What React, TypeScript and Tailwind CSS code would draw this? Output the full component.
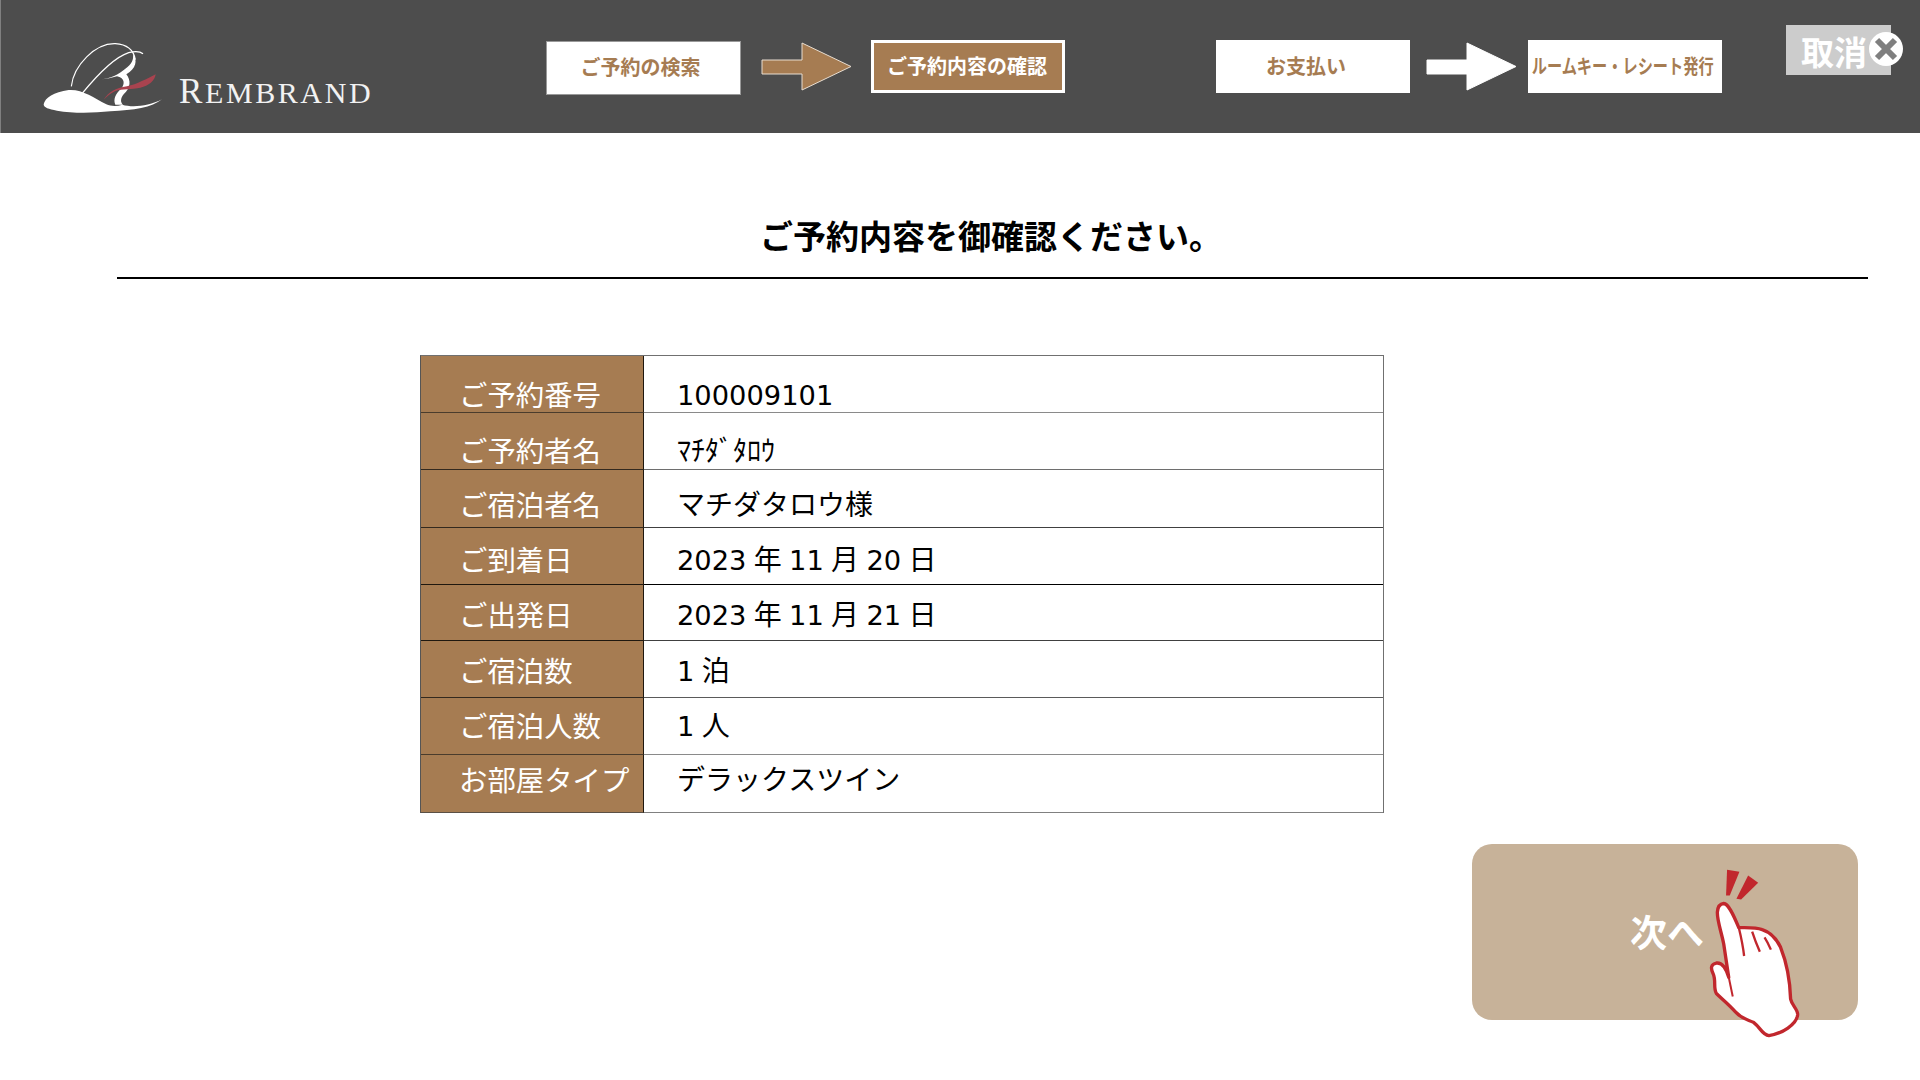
const D = ({ children }: { children: string }) => <span className="text-[27.3px]">{children}</span>;

const rows = [
  { label: "ご予約番号", value: <D>100009101</D>, h: "h-[57px]", pt: "pt-[19px]", line: "border-[#8a8a8a]", dark: "border-[#4a3c2c]" },
  { label: "ご予約者名", value: "ﾏﾁﾀﾞﾀﾛｳ", h: "h-[57px]", pt: "pt-[18px]", line: "border-[#6e6e6e]", dark: "border-[#33291e]" },
  { label: "ご宿泊者名", value: "マチダタロウ様", h: "h-[58px]", pt: "pt-[15px]", line: "border-[#404040]", dark: "border-[#33291e]" },
  { label: "ご到着日", value: <><D>2023</D> 年 <D>11</D> 月 <D>20</D> 日</>, h: "h-[57px]", pt: "pt-[12px]", line: "border-[#000000]", dark: "border-[#1f180f]" },
  { label: "ご出発日", value: <><D>2023</D> 年 <D>11</D> 月 <D>21</D> 日</>, h: "h-[56px]", pt: "pt-[10px]", line: "border-[#404040]", dark: "border-[#1f180f]" },
  { label: "ご宿泊数", value: <><D>1</D> 泊</>, h: "h-[57px]", pt: "pt-[10px]", line: "border-[#5a5a5a]", dark: "border-[#33291e]" },
  { label: "ご宿泊人数", value: <><D>1</D> 人</>, h: "h-[57px]", pt: "pt-[8px]", line: "border-[#8a8a8a]", dark: "border-[#4a3c2c]" },
  { label: "お部屋タイプ", value: "デラックスツイン", h: "h-[58px]", pt: "pt-[5px]", line: "border-[#808080]", dark: "border-[#5a5045]" },
];

function Arrow({ fill, stroke }: { fill: string; stroke: string }) {
  return (
    <svg width="92" height="50" viewBox="0 0 92 50" className="shrink-0">
      <polygon points="1,18 41,18 41,1 90,24.5 41,48 41,32 1,32" fill={fill} stroke={stroke} strokeWidth="1" />
    </svg>
  );
}

function Logo() {
  return (
    <svg width="122" height="72" viewBox="125 125 366 216" className="shrink-0">
      <path d="M130 312 C134 292 160 276 205 269 C245 266 280 292 318 312 C332 318 350 318 366 313 C395 322 445 318 485 297 C455 322 400 330 330 333 C280 338 220 340 170 331 C145 327 130 322 130 312 Z" fill="#fff" />
      <path d="M213 258 C220 195 285 128 345 130 C380 132 400 150 405 178" fill="none" stroke="#fff" strokeWidth="3.5" />
      <path d="M245 280 C290 225 345 170 385 157 C400 153 418 152 428 160" fill="none" stroke="#fff" strokeWidth="4" />
      <path d="M300 237 C330 235 355 222 375 205 C395 192 400 178 398 162 C412 180 408 205 378 222 C392 240 392 262 370 282 C360 295 360 306 368 313 L345 313 C338 298 345 280 362 266 C376 250 372 232 350 228 C335 232 318 237 300 237 Z" fill="#fff" />
      <path d="M310 298 C325 275 345 263 380 258 C410 252 440 235 466 222 C464 240 445 258 420 262 C395 268 365 264 345 272 C332 278 320 288 310 298 Z" fill="#a8434f" />
    </svg>
  );
}

function Hand() {
  return (
    <svg width="97" height="174" viewBox="740 110 290 520" className="absolute left-[235px] top-[23px]">
      <polygon points="800,118 837,124 808,195 797,195" fill="#c1272d" />
      <polygon points="863,135 893,157 842,207 828,205" fill="#c1272d" />
      <path
        d="M790 219 C804 220 818 250 835 291 C855 292 885 290 905 297 C930 305 948 325 960 350 C978 395 988 440 990 505 C994 525 1012 535 1011 552 C1008 580 965 608 925 614 C905 612 900 590 880 575 C862 566 845 565 825 543 C805 520 785 505 768 488 C758 470 768 450 758 428 C750 412 752 400 768 397 C785 395 798 415 805 440 L790 340 C782 300 770 270 771 245 C772 228 780 220 790 219 Z"
        fill="#fff"
        stroke="#c1272d"
        strokeWidth="10"
        strokeLinejoin="round"
      />
      <path d="M835 291 C842 320 848 350 851 376 M875 303 C882 325 890 345 898 363 M912 320 C920 332 926 345 931 357" fill="none" stroke="#c1272d" strokeWidth="7" />
      <path d="M803 430 L817 497" fill="none" stroke="#c1272d" strokeWidth="6" />
    </svg>
  );
}

export default function App() {
  return (
    <div className="h-[1080px] w-[1920px] overflow-hidden bg-white font-['DejaVu_Sans','Noto_Sans_CJK_JP',sans-serif]">
      <header className="flex h-[133px] items-start border-l border-[#808080] bg-[#4d4d4d]">
        <div className="ml-[41px] mt-[42px]"><Logo /></div>
        <div className="ml-[15px] mt-[72px] w-[193px] whitespace-nowrap font-['Liberation_Serif',serif] text-[30px] font-medium leading-[40px] tracking-[2.6px] text-[#f2f2f2]">
          <span className="text-[35px]">R</span>EMBRAND
        </div>
        <div className="ml-[174px] mt-[41px] flex h-[54px] w-[195px] items-center justify-center border border-[#999999] bg-white pb-[3px] pr-[6px] font-['Noto_Sans_CJK_JP',sans-serif] text-[20px] font-bold text-[#a67c52]">
          ご予約の検索
        </div>
        <div className="ml-[20px] mt-[42px]"><Arrow fill="#a67c52" stroke="#e8ddd0" /></div>
        <div className="ml-[18px] mt-[40px] flex h-[53px] w-[194px] items-center justify-center border-[3px] border-white bg-[#a67c52] pb-[1px] pr-[2px] font-['Noto_Sans_CJK_JP',sans-serif] text-[20px] font-bold text-white">
          ご予約内容の確認
        </div>
        <div className="ml-[151px] mt-[40px] flex h-[53px] w-[194px] items-center justify-center bg-white pb-[2px] pr-[14px] font-['Noto_Sans_CJK_JP',sans-serif] text-[20px] font-bold text-[#a67c52]">
          お支払い
        </div>
        <div className="ml-[16px] mt-[42px]"><Arrow fill="#ffffff" stroke="#ffffff" /></div>
        <div className="ml-[10px] mt-[40px] flex h-[53px] w-[194px] items-center justify-center bg-white pb-[2px] pr-[4px] font-['Noto_Sans_CJK_JP',sans-serif] text-[20px] font-bold text-[#a67c52]">
          <span className="scale-x-[0.76] whitespace-nowrap">ルームキー・レシート発行</span>
        </div>
        <div className="relative ml-[64px] mt-[25px] flex h-[50px] w-[105px] items-center bg-[#cccccc] pl-[15px] pt-[2px] font-['Noto_Sans_CJK_JP',sans-serif] text-[33px] font-bold leading-[50px] text-white">
          取消
          <span className="absolute left-[83px] top-[7px] flex h-[34px] w-[34px] items-center justify-center rounded-full bg-white">
            <svg width="26" height="26" viewBox="0 0 26 26">
              <path d="M4 4 L22 22 M22 4 L4 22" stroke="#7f7f7f" strokeWidth="6" />
            </svg>
          </span>
        </div>
      </header>

      <main>
        <h1 className="ml-[760px] mt-[78px] h-[48px] font-['Noto_Sans_CJK_JP',sans-serif] text-[33px] font-bold leading-[48px] text-black">
          ご予約内容を御確認ください。
        </h1>
        <div className="ml-[117px] mt-[18px] h-[2px] w-[1751px] bg-black" />

        <div className="ml-[420px] mt-[76px] w-[964px] border-x border-t border-[#707070] border-l-[#555555]">
          {rows.map((r) => (
            <div key={r.label} className={`flex ${r.h}`}>
              <div className={`w-[223px] shrink-0 whitespace-nowrap border-b border-r border-r-[#1f180f] bg-[#a67c52] pl-[38px] font-['Noto_Sans_CJK_JP',sans-serif] text-[28.4px] font-normal leading-[37px] text-white ${r.pt} ${r.dark}`}>
                {r.label}
              </div>
              <div className={`flex-1 border-b pl-[33px] text-[28px] leading-[42px] text-black [word-spacing:-1.6px] ${r.pt} ${r.line}`}>
                {r.value}
              </div>
            </div>
          ))}
        </div>

        <div className="relative ml-[1472px] mt-[31px] flex h-[176px] w-[386px] items-center rounded-[20px] bg-[#c7b299] pl-[158px] font-['Noto_Sans_CJK_JP',sans-serif] text-[37px] font-bold text-white">
          次へ
          <Hand />
        </div>
      </main>
    </div>
  );
}
